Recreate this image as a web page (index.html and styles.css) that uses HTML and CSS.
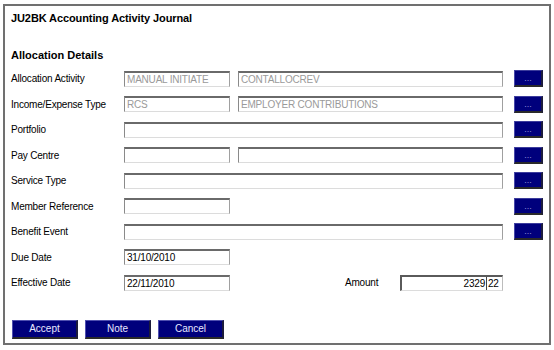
FILE: index.html
```html
<!DOCTYPE html>
<html lang="en">
<head>
    <meta charset="UTF-8">
    <title>JU2BK Accounting Activity Journal</title>
    <link rel="stylesheet" href="styles.css">
</head>
<body>
    <div class="frame">
        <h1 class="title">JU2BK Accounting Activity Journal</h1>
        <h2 class="section">Allocation Details</h2>

        <div class="row">
            <label>Allocation Activity</label>
            <div class="fields">
                <input class="short" type="text" value="MANUAL INITIATE" disabled>
                <input class="rest" type="text" value="CONTALLOCREV" disabled>
            </div>
            <button class="pick">...</button>
        </div>
        <div class="row">
            <label>Income/Expense Type</label>
            <div class="fields">
                <input class="short" type="text" value="RCS" disabled>
                <input class="rest" type="text" value="EMPLOYER CONTRIBUTIONS" disabled>
            </div>
            <button class="pick">...</button>
        </div>
        <div class="row">
            <label>Portfolio</label>
            <div class="fields">
                <input class="full" type="text">
            </div>
            <button class="pick">...</button>
        </div>
        <div class="row">
            <label>Pay Centre</label>
            <div class="fields">
                <input class="short" type="text">
                <input class="rest" type="text">
            </div>
            <button class="pick">...</button>
        </div>
        <div class="row">
            <label>Service Type</label>
            <div class="fields">
                <input class="full" type="text">
            </div>
            <button class="pick">...</button>
        </div>
        <div class="row">
            <label>Member Reference</label>
            <div class="fields">
                <input class="short" type="text">
            </div>
            <button class="pick">...</button>
        </div>
        <div class="row">
            <label>Benefit Event</label>
            <div class="fields">
                <input class="full" type="text">
            </div>
            <button class="pick">...</button>
        </div>
        <div class="row">
            <label>Due Date</label>
            <div class="fields">
                <input class="short" type="text" value="31/10/2010">
            </div>
        </div>
        <div class="row">
            <label>Effective Date</label>
            <div class="fields">
                <input class="short" type="text" value="22/11/2010">
                <span class="amount-label">Amount</span>
                <div class="amount">
                    <span class="units">2329</span><span class="cents">22</span>
                </div>
            </div>
        </div>

        <div class="actions">
            <button class="action">Accept</button>
            <button class="action">Note</button>
            <button class="action">Cancel</button>
        </div>
    </div>
</body>
</html>
```

FILE: styles.css
```css
body {
    margin: 0;
    background: #ffffff;
    font-family: "Liberation Sans", Arial, sans-serif;
    font-size: 10px;
    letter-spacing: -0.2px;
    color: #000;
}
.frame {
    box-sizing: border-box;
    margin: 4px 0 0 3px;
    width: 548px;
    height: 341px;
    border: 2px solid #707070;
    padding: 0 0 0 6px;
}
.title {
    font-size: 11px;
    font-weight: bold;
    letter-spacing: -0.1px;
    margin: 5px 0 0;
    line-height: 14px;
}
.section {
    font-size: 11px;
    font-weight: bold;
    letter-spacing: 0;
    margin: 23px 0 3px;
    line-height: 15px;
}
.row {
    display: flex;
    align-items: center;
    height: 25.5px;
}
.row label {
    width: 113px;
    flex: none;
}
.fields {
    display: flex;
    align-items: center;
    width: 379px;
    flex: none;
    gap: 8px;
}
input {
    box-sizing: border-box;
    height: 16px;
    margin: 0;
    padding: 0 0 0 2px;
    font-family: "Liberation Sans", Arial, sans-serif;
    font-size: 10px;
    letter-spacing: -0.2px;
    color: #000;
    background: #fff;
    border-style: solid;
    border-width: 2px 1px 1px 1px;
    border-color: #6a6a6a #a0a0a0 #dcdcdc #8a8a8a;
}
input:disabled {
    color: #9a9a9a;
}
.short {
    width: 106px;
}
.rest {
    width: 265px;
}
.full {
    width: 379px;
}
.pick {
    box-sizing: border-box;
    width: 29px;
    height: 17px;
    margin-left: 11px;
    padding: 0;
    background: #00007c;
    color: #8c8cd8;
    font-size: 9px;
    line-height: 10px;
    border-style: solid;
    border-width: 1px 2px 2px 1px;
    border-color: #3c3c9c #1c1c3c #2a2a2a #4848a8;
}
.amount-label {
    margin-left: 107px;
    width: 47px;
}
.amount {
    box-sizing: border-box;
    display: flex;
    width: 103px;
    height: 16px;
    border-style: solid;
    border-width: 2px 1px 1px 2px;
    border-color: #5a5a5a #bcbcbc #dcdcdc #5a5a5a;
    line-height: 13px;
}
.units {
    flex: 1;
    text-align: right;
    padding-right: 1px;
    border-right: 1px solid #444;
}
.cents {
    width: 14px;
    padding-left: 1px;
}
.actions {
    display: flex;
    gap: 7px;
    margin: 24px 0 0 1px;
}
.action {
    box-sizing: border-box;
    width: 66px;
    height: 19px;
    padding: 0;
    background: #00007c;
    color: #e8e8ff;
    font-family: "Liberation Sans", Arial, sans-serif;
    font-size: 10px;
    border-style: solid;
    border-width: 1px 2px 2px 1px;
    border-color: #5050b0 #1c1c3c #2a2a2a #5050b0;
}
```
